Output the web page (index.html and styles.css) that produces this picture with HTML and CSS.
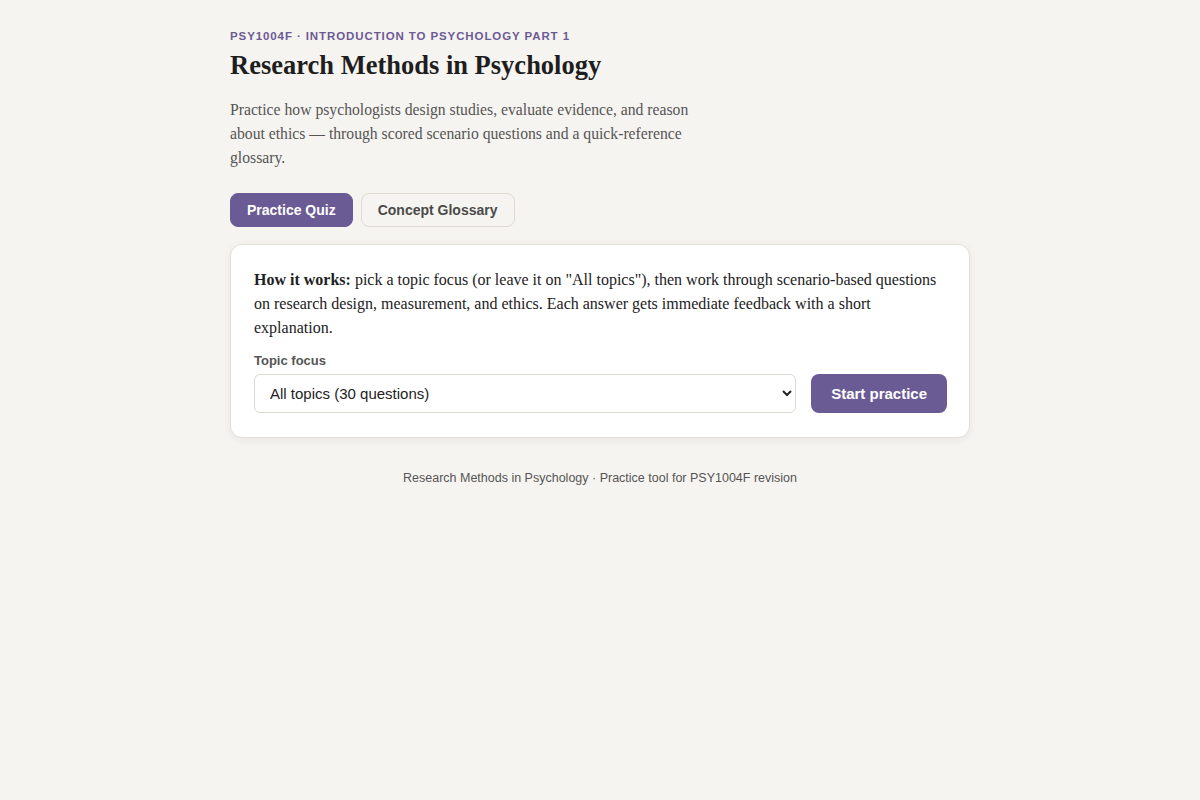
FILE: index.html
```html
<!DOCTYPE html>
<html lang="en">
<head>
  <meta charset="UTF-8">
  <meta name="viewport" content="width=device-width, initial-scale=1.0">
  <title>Research Methods in Psychology</title>
  <link rel="stylesheet" href="styles.css">
</head>
<body>

  <div class="page">

    <!-- Header -->
    <header class="header">
      <p class="eyebrow">PSY1004F · Introduction to Psychology Part 1</p>
      <h1>Research Methods in Psychology</h1>
      <p class="lead">Practice how psychologists design studies, evaluate evidence, and reason about ethics — through scored scenario questions and a quick-reference glossary.</p>
    </header>

    <!-- Tabs -->
    <nav class="tabs">
      <button class="tab active">Practice Quiz</button>
      <button class="tab">Concept Glossary</button>
    </nav>

    <!-- Quiz setup -->
    <div class="card">
      <p class="intro"><strong>How it works:</strong> pick a topic focus (or leave it on "All topics"), then work through scenario-based questions on research design, measurement, and ethics. Each answer gets immediate feedback with a short explanation.</p>
      <label class="label" for="topic">Topic focus</label>
      <div class="setup-row">
        <select id="topic" class="select">
          <option>All topics (30 questions)</option>
          <option>Research design</option>
          <option>Measurement</option>
          <option>Ethics</option>
        </select>
        <button class="start-btn">Start practice</button>
      </div>
    </div>

    <footer class="footer">Research Methods in Psychology · Practice tool for PSY1004F revision</footer>

  </div>

</body>
</html>
```

FILE: styles.css
```css
* {
  margin: 0;
  padding: 0;
  box-sizing: border-box;
}

body {
  background-color: #f6f4f0;
  color: #222;
  font-family: 'Liberation Serif', serif;
}

.page {
  width: 740px;
  margin: 0 auto;
  padding-top: 29px;
}

.eyebrow {
  font-family: 'Liberation Sans', sans-serif;
  font-size: 11.5px;
  font-weight: bold;
  letter-spacing: 0.9px;
  text-transform: uppercase;
  color: #6b5b95;
  line-height: 14px;
}

h1 {
  font-size: 26.5px;
  font-weight: bold;
  color: #1e1e1e;
  margin-top: 5px;
  line-height: 34px;
}

.lead {
  font-size: 15.7px;
  line-height: 24px;
  color: #555;
  max-width: 480px;
  margin-top: 16px;
}

.tabs {
  display: flex;
  gap: 8px;
  margin-top: 23px;
}

.tab {
  font-family: 'Liberation Sans', sans-serif;
  font-size: 14px;
  font-weight: bold;
  height: 34px;
  padding: 0 16px;
  border-radius: 8px;
  border: 1px solid #dedbd3;
  background-color: #f6f4f0;
  color: #4a4a4a;
  cursor: pointer;
}

.tab.active {
  background-color: #6b5b95;
  border-color: #6b5b95;
  color: #fff;
}

.card {
  margin-top: 17px;
  background-color: #fff;
  border: 1px solid #e2dfd8;
  border-radius: 12px;
  box-shadow: 0 2px 8px rgba(0, 0, 0, 0.06);
  padding: 23px 22px 24px 23px;
}

.intro {
  font-size: 16px;
  line-height: 24px;
  color: #222;
}

.intro strong {
  color: #1e1e1e;
}

.label {
  display: block;
  font-family: 'Liberation Sans', sans-serif;
  font-size: 13px;
  font-weight: bold;
  color: #555;
  margin-top: 13px;
  margin-bottom: 6px;
}

.setup-row {
  display: flex;
  align-items: center;
  gap: 15px;
}

.select {
  flex: 1;
  height: 39px;
  font-family: 'Liberation Sans', sans-serif;
  font-size: 15px;
  color: #222;
  padding: 0 11px;
  border: 1px solid #dcd9d2;
  border-radius: 6px;
  background-color: #fff;
}

.start-btn {
  font-family: 'Liberation Sans', sans-serif;
  font-size: 15px;
  font-weight: bold;
  height: 39px;
  padding: 0 20px;
  border: none;
  border-radius: 8px;
  background-color: #6b5b95;
  color: #fff;
  cursor: pointer;
}

.footer {
  font-family: 'Liberation Sans', sans-serif;
  font-size: 12.5px;
  color: #555;
  text-align: center;
  margin-top: 33px;
}
```
